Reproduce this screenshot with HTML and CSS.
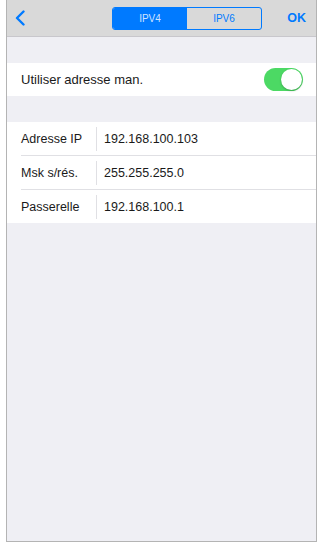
FILE: index.html
```html
<!DOCTYPE html>
<html lang="fr">
<head>
    <meta charset="UTF-8">
    <meta name="viewport" content="width=device-width, initial-scale=1.0">
    <title>Réglages IP</title>
    <link rel="stylesheet" href="styles.css">
</head>
<body>

<div class="phone">
    <div class="topbar">
        <div class="back">
            <svg width="10" height="16" viewBox="0 0 10 16">
                <path d="M8.5 1.5 L2 8 L8.5 14.5" fill="none" stroke="#007aff" stroke-width="2.4" stroke-linecap="round" stroke-linejoin="round"/>
            </svg>
        </div>
        <div class="segment">
            <span class="seg active">IPV4</span>
            <span class="seg">IPV6</span>
        </div>
        <div class="ok">OK</div>
    </div>

    <div class="spacer"></div>

    <div class="group">
        <div class="row">
            <span class="row-text">Utiliser adresse man.</span>
            <span class="toggle"><span class="knob"></span></span>
        </div>
    </div>

    <div class="spacer"></div>

    <div class="group">
        <div class="field">
            <span class="label">Adresse IP</span>
            <span class="value">192.168.100.103</span>
        </div>
        <div class="field">
            <span class="label">Msk s/rés.</span>
            <span class="value">255.255.255.0</span>
        </div>
        <div class="field">
            <span class="label">Passerelle</span>
            <span class="value">192.168.100.1</span>
        </div>
    </div>
</div>

</body>
</html>
```

FILE: styles.css
```css
body {
    margin: 0;
    background-color: #ffffff;
    font-family: "Liberation Sans", Arial, sans-serif;
}
.phone {
    margin-left: 6px;
    width: 309px;
    height: 541px;
    border: 1px solid #b4b4b4;
    border-top: none;
    background-color: #efeff4;
}
.topbar {
    height: 36px;
    background-color: #d9d9d9;
    border-bottom: 1px solid #c8c7cc;
    display: flex;
    align-items: center;
}
.back {
    width: 10px;
    height: 16px;
    margin-left: 8px;
    display: flex;
}
.segment {
    display: flex;
    width: 148px;
    height: 21px;
    margin-left: 87px;
    border: 1px solid #007aff;
    border-radius: 3px;
    overflow: hidden;
}
.seg {
    flex: 1;
    display: flex;
    align-items: center;
    justify-content: center;
    font-size: 10px;
    color: #007aff;
}
.seg.active {
    background-color: #007aff;
    color: #cfe4ff;
}
.ok {
    margin-left: auto;
    margin-right: 10px;
    font-size: 12.5px;
    font-weight: bold;
    color: #007aff;
}
.spacer {
    height: 26px;
}
.group {
    background-color: #ffffff;
}
.row {
    height: 33px;
    display: flex;
    align-items: center;
    padding: 0 13px 0 14px;
}
.row-text {
    font-size: 13px;
    color: #1a1a1a;
}
.toggle {
    margin-left: auto;
    width: 39px;
    height: 23px;
    border-radius: 12px;
    background-color: #4cd964;
    display: flex;
    align-items: center;
    justify-content: flex-end;
}
.knob {
    width: 21px;
    height: 21px;
    margin-right: 1px;
    border-radius: 50%;
    background-color: #ffffff;
    box-shadow: 0 1px 2px rgba(0, 0, 0, 0.25);
}
.field {
    height: 33px;
    display: flex;
    align-items: center;
    margin-left: 14px;
    border-bottom: 1px solid #e0e0e4;
    font-size: 12.5px;
    color: #1a1a1a;
}
.field:last-child {
    border-bottom: none;
}
.label {
    width: 75px;
    height: 24px;
    line-height: 24px;
    border-right: 1px solid #e0e0e4;
}
.value {
    margin-left: 7px;
}
```
